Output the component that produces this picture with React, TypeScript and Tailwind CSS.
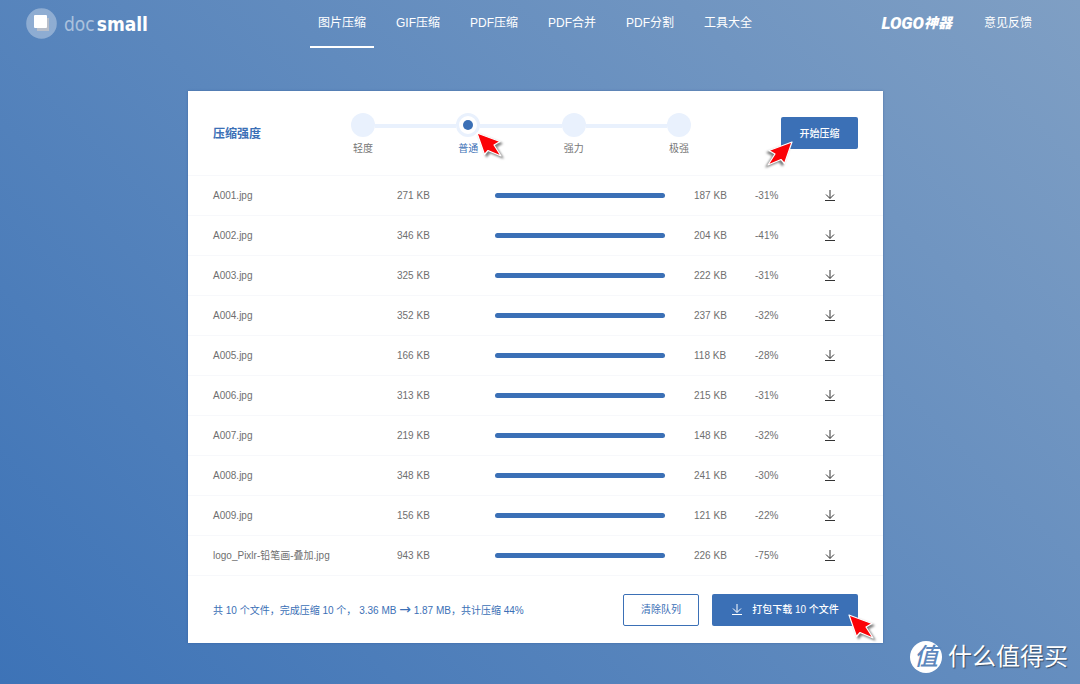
import React from 'react';
import clsx from 'clsx';

interface FileRow {
  name: string;
  before: string;
  after: string;
  ratio: string;
}

const tools = ['图片压缩', 'GIF压缩', 'PDF压缩', 'PDF合并', 'PDF分割', '工具大全'];

const levels = ['轻度', '普通', '强力', '极强'];

const files: FileRow[] = [
  { name: 'A001.jpg', before: '271 KB', after: '187 KB', ratio: '-31%' },
  { name: 'A002.jpg', before: '346 KB', after: '204 KB', ratio: '-41%' },
  { name: 'A003.jpg', before: '325 KB', after: '222 KB', ratio: '-31%' },
  { name: 'A004.jpg', before: '352 KB', after: '237 KB', ratio: '-32%' },
  { name: 'A005.jpg', before: '166 KB', after: '118 KB', ratio: '-28%' },
  { name: 'A006.jpg', before: '313 KB', after: '215 KB', ratio: '-31%' },
  { name: 'A007.jpg', before: '219 KB', after: '148 KB', ratio: '-32%' },
  { name: 'A008.jpg', before: '348 KB', after: '241 KB', ratio: '-30%' },
  { name: 'A009.jpg', before: '156 KB', after: '121 KB', ratio: '-22%' },
  { name: 'logo_Pixlr-铅笔画-叠加.jpg', before: '943 KB', after: '226 KB', ratio: '-75%' },
];

const DownloadIcon = () => (
  <svg width="12" height="12" viewBox="0 0 12 12" fill="none" stroke="currentColor" aria-hidden="true">
    <path d="M6 0V8.3M2 4.5L6 8.5L10 4.5M1 10.5H11" />
  </svg>
);

// Red pointer with its tip at the top left corner of the box
const Pointer: React.FC<{ className?: string }> = ({ className }) => (
  <svg
    width="32"
    height="32"
    viewBox="0 0 32 32"
    className={clsx('pointer-events-none absolute drop-shadow-[2px_2px_1px_rgba(0,0,0,0.5)]', className)}
    aria-hidden="true"
  >
    <path d="M1 1L24 9.5L18 13L25 24L12 18.5L8.5 22.5Z" fill="#fb0207" stroke="#fff" strokeWidth="1.2" strokeLinejoin="round" />
  </svg>
);

const Header = () => (
  <header className="flex h-12 items-start pl-[26px] pr-12 text-xs text-white">
    <a href="#" className="flex w-[284px] shrink-0 items-center pt-2">
      <svg width="31" height="31" viewBox="0 0 31 31" aria-hidden="true">
        <circle cx="15.5" cy="15.5" r="15.3" fill="#fff" fillOpacity="0.33" />
        <rect x="11" y="10" width="12" height="13" fill="#b9bfca" />
        <rect x="8" y="7" width="13" height="13" rx="1" fill="#fff" />
      </svg>
      <span className="ml-[7px] flex gap-0.5 font-['DejaVu_Sans_Condensed','DejaVu_Sans',sans-serif] text-[19px] leading-7">
        <span className="text-white/50">doc</span>
        <span className="font-bold">small</span>
      </span>
    </a>
    <nav className="flex gap-3.5">
      {tools.map((tool, i) => (
        <a
          key={tool}
          href="#"
          className={clsx(
            'h-12 whitespace-nowrap border-b-2 px-2 leading-[46px]',
            i === 0 ? 'border-white' : 'border-transparent'
          )}
        >
          {tool}
        </a>
      ))}
    </nav>
    <div className="ml-auto flex items-center gap-8 leading-[46px]">
      <a href="#" className="flex items-center whitespace-nowrap font-black italic">
        <span className="font-[Roboto,sans-serif] text-[17px]">LOGO</span>
        <span className="text-sm leading-[46px]">神器</span>
      </a>
      <a href="#" className="whitespace-nowrap">意见反馈</a>
    </div>
  </header>
);

const Stepper = () => (
  <div role="radiogroup" aria-label="压缩强度" className="mr-[90px] flex flex-1 items-start pt-1">
    {levels.map((level, i) => (
      <React.Fragment key={level}>
        {i > 0 && <div className="mt-[11px] h-1 flex-1 bg-[#e9f1fd]" />}
        <label className="relative flex w-6 flex-col items-center">
          <input
            type="radio"
            name="level"
            defaultChecked={i === 1}
            className="peer size-6 appearance-none rounded-full bg-[#e9f1fd] checked:border-[3px] checked:border-[#e9f1fd] checked:bg-[#3b70b6] checked:bg-clip-content checked:p-1"
          />
          <span className="mt-1 whitespace-nowrap leading-4 text-[#777] peer-checked:text-[#3b70b6]">{level}</span>
          {i === 1 && <Pointer className="left-5 top-[19px]" />}
        </label>
      </React.Fragment>
    ))}
  </div>
);

const FileTable = () => (
  <table className="w-full table-fixed border-y border-[#f7f8fb] text-left text-[#6f6f6f]">
    <colgroup>
      <col />
      <col className="w-[98px]" />
      <col className="w-[199px]" />
      <col className="w-[61px]" />
      <col className="w-[69px]" />
      <col className="w-[59px]" />
    </colgroup>
    <tbody className="divide-y divide-[#f7f8fb]">
      {files.map(file => (
        <tr key={file.name} className="h-10">
          <td className="truncate pl-[25px]">{file.name}</td>
          <td>{file.before}</td>
          <td className="pr-[29px]">
            <div className="h-[5px] rounded-full bg-[#3b70b6]" />
          </td>
          <td>{file.after}</td>
          <td>{file.ratio}</td>
          <td>
            <button type="button" aria-label={`下载 ${file.name}`} className="block text-[#333]">
              <DownloadIcon />
            </button>
          </td>
        </tr>
      ))}
    </tbody>
  </table>
);

const App = () => (
  <div className="relative min-h-screen bg-[linear-gradient(45deg,#3d73b7,#7f9fc4)] font-['Liberation_Sans','Noto_Sans_CJK_SC',sans-serif]">
    <Header />
    <main className="ml-[188px] mr-[197px] mt-[43px] bg-white text-[10px] shadow-[0_0_2px_rgba(40,80,140,0.5)]">
      <section className="flex h-[84px] items-center px-[25px]">
        <h1 className="w-[138px] shrink-0 pt-0.5 text-xs font-bold text-[#3b70b6]">压缩强度</h1>
        <Stepper />
        <div className="relative">
          <button type="button" className="h-8 w-[77px] rounded-xs bg-[#3b70b6] font-medium text-white">
            开始压缩
          </button>
          <Pointer className="-left-5 top-6 -scale-x-100" />
        </div>
      </section>
      <FileTable />
      <section className="flex h-[67px] items-center px-[25px]">
        <p className="whitespace-pre text-[#3b70b6]">
          共 10 个文件，完成压缩 10 个， 3.36 MB <span className="font-['DejaVu_Sans',sans-serif] text-sm leading-none">→</span> 1.87 MB，共计压缩 44%
        </p>
        <div className="relative ml-auto flex gap-[13px]">
          <button type="button" className="h-8 w-[76px] rounded-xs border border-[#3b70b6] text-[#3b70b6]">
            清除队列
          </button>
          <button
            type="button"
            className="flex h-8 w-[146px] items-center justify-center gap-[9px] rounded-xs bg-[#3b70b6] font-medium text-white"
          >
            <DownloadIcon />
            打包下载 10 个文件
          </button>
          <Pointer className="-right-[22px] top-5" />
        </div>
      </section>
    </main>
    <div className="absolute bottom-[11px] right-3 flex items-center gap-1.5 text-white">
      <span className="grid size-8 place-items-center rounded-full bg-white text-2xl font-medium italic leading-none text-[#5c87bd]">
        值
      </span>
      <span className="text-2xl leading-8 [text-shadow:1px_1px_1px_rgba(0,0,0,0.45)]">什么值得买</span>
    </div>
  </div>
);

export default App;
